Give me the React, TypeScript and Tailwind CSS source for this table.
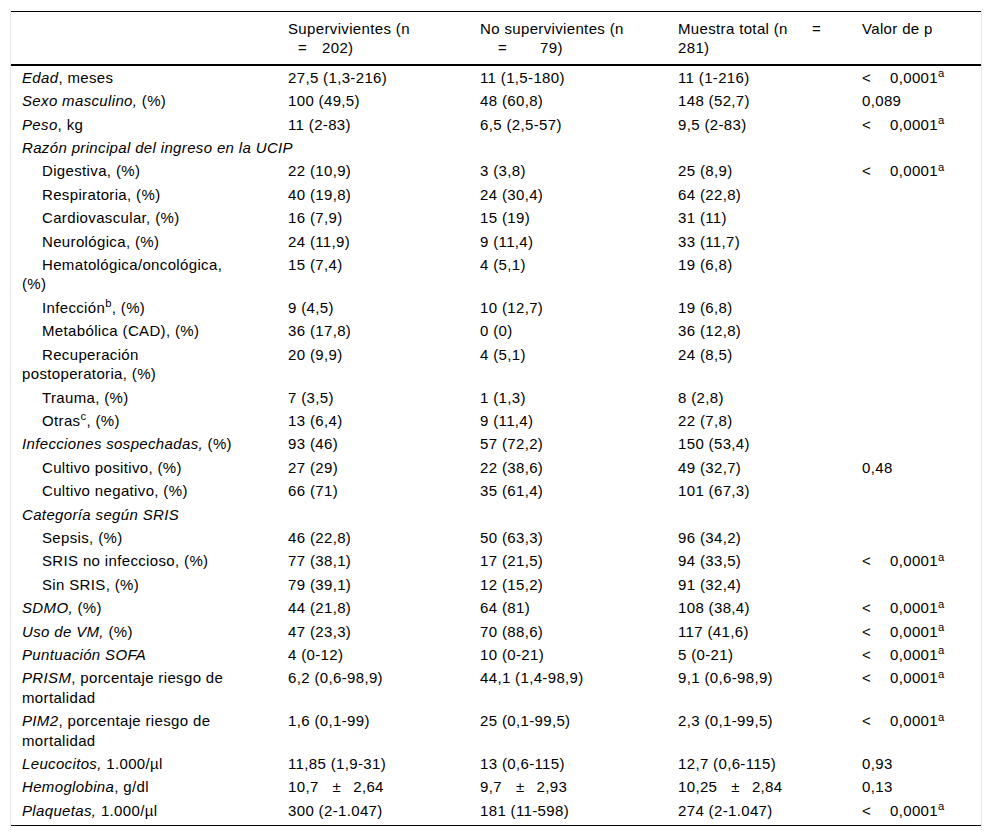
import { ReactNode } from "react";

type Row = {
  label: ReactNode;
  sub?: boolean;
  span?: boolean;
  v?: [ReactNode, ReactNode, ReactNode, ReactNode];
};

const lt = (
  <>
    <span className="inline-block w-[28px]">&lt;</span>0,0001<sup>a</sup>
  </>
);

const pm = (a: string, b: string) => (
  <>
    {a}
    <span className="ml-[14px] mr-[12px]">±</span>
    {b}
  </>
);

const rows: Row[] = [
  { label: <><i>Edad</i>, meses</>, v: ["27,5 (1,3-216)", "11 (1,5-180)", "11 (1-216)", lt] },
  { label: <><i>Sexo masculino,</i> (%)</>, v: ["100 (49,5)", "48 (60,8)", "148 (52,7)", "0,089"] },
  { label: <><i>Peso</i>, kg</>, v: ["11 (2-83)", "6,5 (2,5-57)", "9,5 (2-83)", lt] },
  { label: <i>Razón principal del ingreso en la UCIP</i>, span: true },
  { label: "Digestiva, (%)", sub: true, v: ["22 (10,9)", "3 (3,8)", "25 (8,9)", lt] },
  { label: "Respiratoria, (%)", sub: true, v: ["40 (19,8)", "24 (30,4)", "64 (22,8)", ""] },
  { label: "Cardiovascular, (%)", sub: true, v: ["16 (7,9)", "15 (19)", "31 (11)", ""] },
  { label: "Neurológica, (%)", sub: true, v: ["24 (11,9)", "9 (11,4)", "33 (11,7)", ""] },
  { label: <>Hematológica/oncológica,<br />(%)</>, sub: true, v: ["15 (7,4)", "4 (5,1)", "19 (6,8)", ""] },
  { label: <>Infección<sup>b</sup>, (%)</>, sub: true, v: ["9 (4,5)", "10 (12,7)", "19 (6,8)", ""] },
  { label: "Metabólica (CAD), (%)", sub: true, v: ["36 (17,8)", "0 (0)", "36 (12,8)", ""] },
  { label: <>Recuperación<br />postoperatoria, (%)</>, sub: true, v: ["20 (9,9)", "4 (5,1)", "24 (8,5)", ""] },
  { label: "Trauma, (%)", sub: true, v: ["7 (3,5)", "1 (1,3)", "8 (2,8)", ""] },
  { label: <>Otras<sup>c</sup>, (%)</>, sub: true, v: ["13 (6,4)", "9 (11,4)", "22 (7,8)", ""] },
  { label: <><i>Infecciones sospechadas,</i> (%)</>, v: ["93 (46)", "57 (72,2)", "150 (53,4)", ""] },
  { label: "Cultivo positivo, (%)", sub: true, v: ["27 (29)", "22 (38,6)", "49 (32,7)", "0,48"] },
  { label: "Cultivo negativo, (%)", sub: true, v: ["66 (71)", "35 (61,4)", "101 (67,3)", ""] },
  { label: <i>Categoría según SRIS</i>, span: true },
  { label: "Sepsis, (%)", sub: true, v: ["46 (22,8)", "50 (63,3)", "96 (34,2)", ""] },
  { label: "SRIS no infeccioso, (%)", sub: true, v: ["77 (38,1)", "17 (21,5)", "94 (33,5)", lt] },
  { label: "Sin SRIS, (%)", sub: true, v: ["79 (39,1)", "12 (15,2)", "91 (32,4)", ""] },
  { label: <><i>SDMO,</i> (%)</>, v: ["44 (21,8)", "64 (81)", "108 (38,4)", lt] },
  { label: <><i>Uso de VM,</i> (%)</>, v: ["47 (23,3)", "70 (88,6)", "117 (41,6)", lt] },
  { label: <i>Puntuación SOFA</i>, v: ["4 (0-12)", "10 (0-21)", "5 (0-21)", lt] },
  { label: <><i>PRISM</i>, porcentaje riesgo de<br />mortalidad</>, v: ["6,2 (0,6-98,9)", "44,1 (1,4-98,9)", "9,1 (0,6-98,9)", lt] },
  { label: <><i>PIM2</i>, porcentaje riesgo de<br />mortalidad</>, v: ["1,6 (0,1-99)", "25 (0,1-99,5)", "2,3 (0,1-99,5)", lt] },
  { label: <><i>Leucocitos,</i> 1.000/µl</>, v: ["11,85 (1,9-31)", "13 (0,6-115)", "12,7 (0,6-115)", "0,93"] },
  { label: <><i>Hemoglobina</i>, g/dl</>, v: [pm("10,7", "2,64"), pm("9,7", "2,93"), pm("10,25", "2,84"), "0,13"] },
  { label: <><i>Plaquetas,</i> 1.000/µl</>, v: ["300 (2-1.047)", "181 (11-598)", "274 (2-1.047)", lt] },
];

export default function App() {
  return (
    <div className="bg-white min-h-[838px] pt-[10px] font-['Liberation_Sans',Arial,sans-serif] text-[15px] tracking-[0.35px] leading-[19.4px] text-black">
      <div className="mx-[10px] border-x border-[#e6e6e6] pt-[1px] pb-[4px]">
        <table className="w-full table-fixed border-collapse">
          <colgroup>
            <col className="w-[266px]" />
            <col className="w-[192px]" />
            <col className="w-[198px]" />
            <col className="w-[184px]" />
            <col className="w-[130px]" />
          </colgroup>
          <thead>
            <tr className="border-t border-b-2 border-black align-top text-left">
              <th className="font-normal pl-[11px] pt-[7px] pb-[6px]"></th>
              <th className="font-normal pl-[11px] pt-[7px] pb-[6px]">
                Supervivientes (n
                <br />
                <span className="inline-block w-[34px] pl-[10px]">=</span>202)
              </th>
              <th className="font-normal pl-[11px] pt-[7px] pb-[6px]">
                No supervivientes (n
                <br />
                <span className="inline-block w-[60px] pl-[18px]">=</span>79)
              </th>
              <th className="font-normal pl-[11px] pt-[7px] pb-[6px]">
                <span className="inline-block w-[134px]">Muestra total (n</span>=
                <br />
                281)
              </th>
              <th className="font-normal pl-[11px] pt-[7px] pb-[6px]">Valor de p</th>
            </tr>
          </thead>
          <tbody className="border-b border-black">
            {rows.map((r, i) => {
              const pb = i === rows.length - 1 ? "pt-[2px] pb-[5px]" : "py-[2px]";
              return (
                <tr key={i} className="align-top">
                  {r.span ? (
                    <td colSpan={5} className={`pl-[11px] ${pb}`}>
                      {r.label}
                    </td>
                  ) : (
                    <>
                      <td className={`pl-[11px] pr-[8px] ${pb} ${r.sub ? "indent-5" : ""}`}>{r.label}</td>
                      {r.v?.map((c, j) => (
                        <td key={j} className={`pl-[11px] ${pb} whitespace-nowrap`}>
                          {c}
                        </td>
                      ))}
                    </>
                  )}
                </tr>
              );
            })}
          </tbody>
        </table>
      </div>
    </div>
  );
}
